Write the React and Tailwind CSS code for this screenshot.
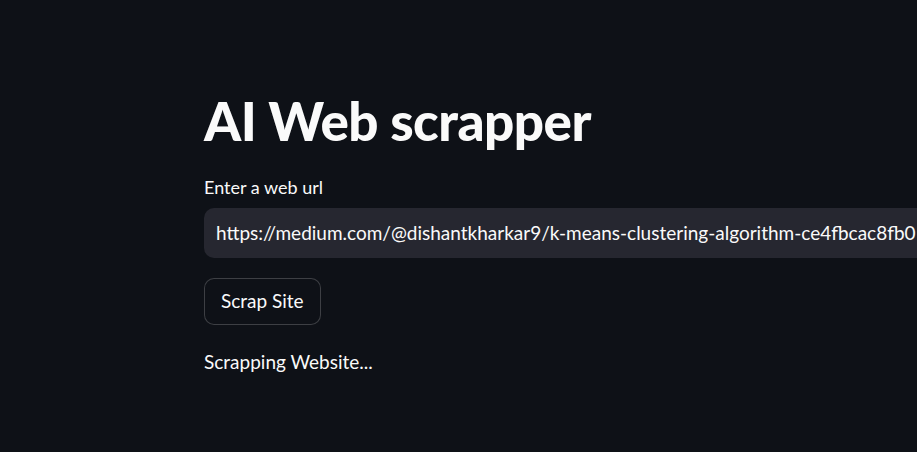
import React from "react";

export default function App() {
  return (
    <div
      className="w-[917px] h-[452px] overflow-hidden bg-[#0e1117] text-[#fafafa]"
      style={{ fontFamily: '"Lato", "Noto Sans", sans-serif' }}
    >
      <div className="pl-[204px] pt-[88px] flex flex-col">
        {/* Title */}
        <h1 className="text-[53px] font-black leading-[66px] tracking-[-0.5px] whitespace-nowrap">
          AI Web scrapper
        </h1>

        {/* URL input */}
        <label className="mt-[22px] text-[18px] leading-[22px]">Enter a web url</label>
        <div className="mt-[10px] h-[50px] w-[800px] rounded-[10px] bg-[#262730] flex items-center pl-[12px] overflow-hidden">
          <span className="text-[19px] whitespace-nowrap">
            https://medium.com/@dishantkharkar9/k-means-clustering-algorithm-ce4fbcac8fb0
          </span>
        </div>

        {/* Button */}
        <div className="mt-[20px]">
          <button className="h-[47px] px-[16px] rounded-[10px] border border-[#fafafa33] bg-[#0e1117] text-[19px] text-[#fafafa]">
            Scrap Site
          </button>
        </div>

        {/* Status */}
        <p className="mt-[23px] text-[19px] leading-[28px] whitespace-nowrap">Scrapping Website...</p>
      </div>
    </div>
  );
}
